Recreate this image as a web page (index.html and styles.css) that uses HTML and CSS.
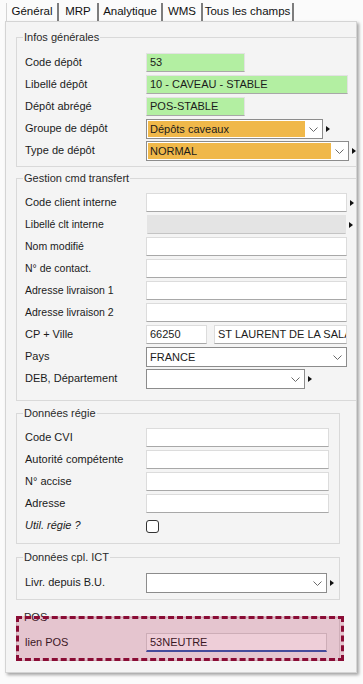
FILE: index.html
```html
<!DOCTYPE html>
<html lang="fr">
<head>
  <meta charset="UTF-8" />
  <title>Dépôt - Général</title>
  <link rel="stylesheet" href="styles.css">
</head>
<body>
  <nav class="tabs">
    <span class="tab active t-general">Général</span>
    <span class="tab t-mrp">MRP</span>
    <span class="tab t-analytique">Analytique</span>
    <span class="tab t-wms">WMS</span>
    <span class="tab t-tous">Tous les champs</span>
  </nav>

  <main class="panel">
    <fieldset class="group wide first">
      <legend>Infos générales</legend>
      <div class="row">
        <label>Code dépôt</label>
        <div class="field"><span class="input green w99">53</span></div>
      </div>
      <div class="row">
        <label>Libellé dépôt</label>
        <div class="field"><span class="input green w202">10 - CAVEAU - STABLE</span></div>
      </div>
      <div class="row">
        <label>Dépôt abrégé</label>
        <div class="field"><span class="input green w99">POS-STABLE</span></div>
      </div>
      <div class="row">
        <label>Groupe de dépôt</label>
        <div class="field">
          <div class="select w177">
            <span class="val orange">Dépôts caveaux</span>
            <span class="btn"><svg width="9" height="5" viewBox="0 0 9 5"><polyline points="0.5,0.5 4.5,4.5 8.5,0.5" fill="none" stroke="#6a6a6a" stroke-width="1"/></svg></span>
          </div>
          <span class="more"></span>
        </div>
      </div>
      <div class="row">
        <label>Type de dépôt</label>
        <div class="field">
          <div class="select w203">
            <span class="val orange">NORMAL</span>
            <span class="btn"><svg width="9" height="5" viewBox="0 0 9 5"><polyline points="0.5,0.5 4.5,4.5 8.5,0.5" fill="none" stroke="#6a6a6a" stroke-width="1"/></svg></span>
          </div>
          <span class="more"></span>
        </div>
      </div>
    </fieldset>

    <fieldset class="group wide transfer">
      <legend>Gestion cmd transfert</legend>
      <div class="row">
        <label>Code client interne</label>
        <div class="field"><span class="input w201"></span><span class="more"></span></div>
      </div>
      <div class="row">
        <label class="small">Libellé clt interne</label>
        <div class="field"><span class="input disabled"></span><span class="more"></span></div>
      </div>
      <div class="row">
        <label class="small">Nom modifié</label>
        <div class="field"><span class="input w201"></span></div>
      </div>
      <div class="row">
        <label class="small">N° de contact.</label>
        <div class="field"><span class="input w201"></span></div>
      </div>
      <div class="row">
        <label class="small">Adresse livraison 1</label>
        <div class="field"><span class="input w201"></span></div>
      </div>
      <div class="row">
        <label class="small">Adresse livraison 2</label>
        <div class="field"><span class="input w201"></span></div>
      </div>
      <div class="row">
        <label>CP + Ville</label>
        <div class="field split">
          <span class="input w61">66250</span>
          <span class="input w133">ST LAURENT DE LA SALANQUE</span>
        </div>
      </div>
      <div class="row">
        <label>Pays</label>
        <div class="field">
          <div class="select w201">
            <span class="val">FRANCE</span>
            <span class="btn"><svg width="9" height="5" viewBox="0 0 9 5"><polyline points="0.5,0.5 4.5,4.5 8.5,0.5" fill="none" stroke="#6a6a6a" stroke-width="1"/></svg></span>
          </div>
        </div>
      </div>
      <div class="row">
        <label>DEB, Département</label>
        <div class="field">
          <div class="select w159">
            <span class="val"></span>
            <span class="btn"><svg width="9" height="5" viewBox="0 0 9 5"><polyline points="0.5,0.5 4.5,4.5 8.5,0.5" fill="none" stroke="#6a6a6a" stroke-width="1"/></svg></span>
          </div>
          <span class="more"></span>
        </div>
      </div>
    </fieldset>

    <fieldset class="group narrow regie">
      <legend>Données régie</legend>
      <div class="row">
        <label>Code CVI</label>
        <div class="field"><span class="input w183"></span></div>
      </div>
      <div class="row">
        <label>Autorité compétente</label>
        <div class="field"><span class="input w183"></span></div>
      </div>
      <div class="row">
        <label>N° accise</label>
        <div class="field"><span class="input w183"></span></div>
      </div>
      <div class="row">
        <label>Adresse</label>
        <div class="field"><span class="input w183"></span></div>
      </div>
      <div class="row">
        <label class="italic">Util. régie ?</label>
        <div class="field"><span class="check"></span></div>
      </div>
    </fieldset>

    <fieldset class="group narrow ict">
      <legend>Données cpl. ICT</legend>
      <div class="row">
        <label>Livr. depuis B.U.</label>
        <div class="field">
          <div class="select w181">
            <span class="val"></span>
            <span class="btn"><svg width="9" height="5" viewBox="0 0 9 5"><polyline points="0.5,0.5 4.5,4.5 8.5,0.5" fill="none" stroke="#6a6a6a" stroke-width="1"/></svg></span>
          </div>
          <span class="more"></span>
        </div>
      </div>
    </fieldset>

    <div class="highlight">
      <fieldset class="group narrow pos">
        <legend>POS</legend>
        <div class="row">
          <label>lien POS</label>
          <div class="field"><span class="input focus w181">53NEUTRE</span></div>
        </div>
      </fieldset>
    </div>
  </main>
</body>
</html>
```

FILE: styles.css
```css
:root {
  --panel: #f4f4f4;
  --line: #d9d9d9;
  --text: #1b1b1b;
  --green: #b3efa2;
  --orange: #f0b84a;
  --maroon: #8a0c35;
  --font: 'Liberation Sans', Arial, sans-serif;
}

* {
  box-sizing: border-box;
}

body {
  margin: 0;
  width: 363px;
  height: 684px;
  overflow: hidden;
  background: #fbfbfb;
  font-family: var(--font);
  font-size: 11px;
  color: var(--text);
}

/* tabs */
.tabs {
  display: flex;
  height: 21px;
  padding-left: 6px;
}

.tab {
  margin-top: 3px;
  height: 18px;
  font-size: 11.5px;
  line-height: 17px;
  text-align: center;
  color: #111;
  border-right: 2px solid #7d7d7d;
}

.tab.active {
  border-left: 1px solid #d4d4d4;
}

.t-general { width: 53px; }
.t-mrp { width: 40px; }
.t-analytique { width: 64px; }
.t-wms { width: 40px; }
.t-tous { width: 91px; }

/* panel */
.panel {
  margin-left: 5px;
  width: 352px;
  height: 652px;
  background: var(--panel);
  border: 1px solid #d4d4d4;
  box-shadow: 2px 2px 3px rgba(0, 0, 0, 0.35);
  overflow: hidden;
  padding-left: 10px;
}

fieldset.group {
  margin: 0;
  min-width: 0;
  border: 1px solid var(--line);
  padding: 8px 0 12px 8px;
}

legend {
  margin-left: -2px;
  padding: 0 1px;
  font-size: 11px;
  line-height: 14px;
  color: #2a2a2a;
}

.wide {
  margin-right: -6px !important;
}

.narrow {
  width: 324px;
}

.first {
  margin-top: 8px !important;
  padding: 9px 0 6px 8px !important;
}

.transfer {
  margin-top: 4px !important;
}

.regie {
  margin-top: 5px !important;
  padding: 8px 0 8px 8px !important;
}

.ict {
  margin-top: 6px !important;
  padding: 9px 0 7px 8px !important;
}

.pos {
  padding: 9px 0 8px 8px !important;
}

/* rows */
.row {
  display: flex;
  align-items: center;
  height: 19px;
  margin-bottom: 3px;
}

.row:last-child {
  margin-bottom: 0;
}

.row label {
  width: 121px;
  flex-shrink: 0;
  padding-bottom: 2px;
}

.row label.small {
  font-size: 10.5px;
}

.row label.italic {
  font-style: italic;
}

.field {
  display: flex;
  align-items: center;
}

.field.split {
  gap: 7px;
}

.input {
  display: block;
  height: 19px;
  padding: 0 3px;
  background: #fff;
  border: 1px solid #dcdcdc;
  border-bottom-color: #a8a8a8;
  line-height: 17px;
  white-space: nowrap;
  overflow: hidden;
}

.input.green {
  background: var(--green);
  border-color: #e2e2e2;
  border-bottom-color: #a8a8a8;
}

.input.disabled {
  width: 199px;
  margin-left: 1px;
  background: #e4e4e4;
  border-color: #e4e4e4;
  border-bottom-color: #c4c4c4;
}

.input.focus {
  border-color: #d6d6d6;
  border-bottom: 2px solid #2b5bb3;
  line-height: 16px;
}

.w61 { width: 61px; }
.w99 { width: 99px; }
.w133 { width: 133px; }
.w159 { width: 159px; }
.w177 { width: 177px; }
.w181 { width: 181px; }
.w183 { width: 183px; }
.w201 { width: 201px; }
.w202 { width: 202px; }
.w203 { width: 203px; }

.select {
  display: flex;
  height: 20px;
  background: #fff;
  border: 1px solid #8c8c8c;
}

.select .val {
  flex: 1;
  padding: 0 3px;
  line-height: 18px;
  white-space: nowrap;
}

.select .val.orange {
  margin: 1px 0 1px 1px;
  padding-left: 2px;
  background: var(--orange);
  line-height: 16px;
}

.select .btn {
  width: 17px;
  display: flex;
  align-items: center;
  justify-content: center;
  padding-top: 1px;
}

.more {
  width: 0;
  height: 0;
  margin-left: 3px;
  border-left: 4px solid #111;
  border-top: 3.5px solid transparent;
  border-bottom: 3.5px solid transparent;
}

.check {
  width: 13px;
  height: 13px;
  margin-top: 2px;
  background: #fff;
  border: 1px solid #333;
  border-radius: 3px;
}

/* dashed highlight laid over the POS group */
.highlight {
  position: relative;
  margin-top: 10px;
  width: 324px;
}

.highlight::after {
  content: "";
  position: absolute;
  left: 0;
  right: -4px;
  top: 6px;
  bottom: 0;
  border: 3px dashed var(--maroon);
  background: rgba(169, 9, 59, 0.2);
  pointer-events: none;
}
```
